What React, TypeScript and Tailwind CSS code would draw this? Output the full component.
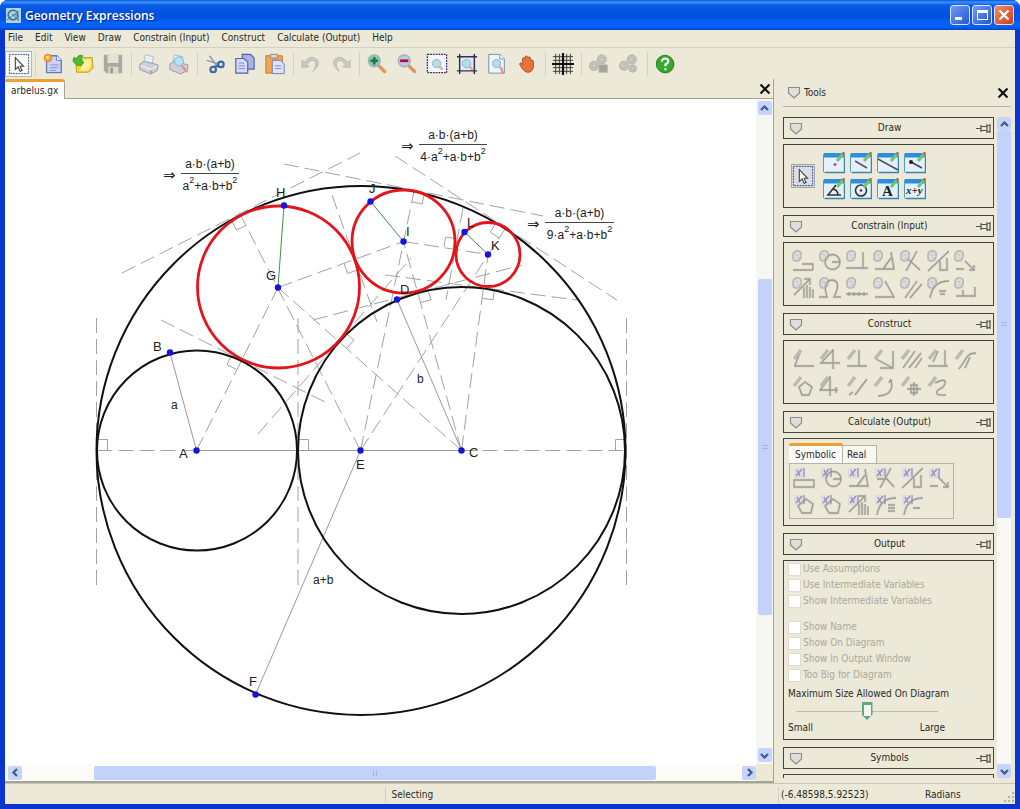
import React from "react";

type Pt = [number, number];

const A: Pt = [196.5, 450.5];
const C: Pt = [461.5, 450.5];
const E: Pt = [360.5, 450.5];
const G: Pt = [278, 287.5];
const I: Pt = [403.5, 241.5];
const K: Pt = [488, 254.5];
const B: Pt = [170, 352.5];
const D: Pt = [397, 299.5];
const F: Pt = [255.5, 694.5];
const H: Pt = [284, 205.5];
const J: Pt = [370.5, 201.5];
const L: Pt = [464.5, 232];

function Seg({ a, b, green = false }: { a: Pt; b: Pt; green?: boolean }) {
  return <line x1={a[0]} y1={a[1]} x2={b[0]} y2={b[1]} stroke={green ? "#3f8f4a" : "#9a9a9a"} />;
}

function Dash({ a, b }: { a: Pt; b: Pt }) {
  return <line x1={a[0]} y1={a[1]} x2={b[0]} y2={b[1]} stroke="#a2a2a2" strokeDasharray="15 6" />;
}

function RightAngle({ p, d, t, s = 10.5 }: { p: Pt; d: Pt; t: Pt; s?: number }) {
  const q = [
    [p[0] + t[0] * s, p[1] + t[1] * s],
    [p[0] + (t[0] + d[0]) * s, p[1] + (t[1] + d[1]) * s],
    [p[0] + d[0] * s, p[1] + d[1] * s],
  ];
  return <polyline points={q.map((v) => v.join(",")).join(" ")} fill="none" stroke="#a2a2a2" />;
}

function Formula({ x, y, lead, w }: { x: number; y: number; lead: string; w: number }) {
  const sup = <tspan dy="-7" fontSize="9">2</tspan>;
  return (
    <g fontSize="12" fill="#222">
      <text x={x} y={y + 7} fontFamily="DejaVu Sans" fontSize="15">⇒</text>
      <text x={x + 18 + w / 2} y={y - 5} textAnchor="middle">a·b·(a+b)</text>
      <line x1={x + 18} y1={y + 0.5} x2={x + 18 + w} y2={y + 0.5} stroke="#444" />
      <text x={x + 18 + w / 2} y={y + 17} textAnchor="middle">
        {lead}a{sup}<tspan dy="7">+a·b+b</tspan>{sup}
      </text>
    </g>
  );
}

const labels: [string, number, number][] = [
  ["A", 179, 458], ["B", 153, 351], ["C", 469, 457], ["D", 400, 294], ["E", 356, 469],
  ["F", 249, 686], ["G", 266, 280], ["H", 276, 197], ["I", 406, 236], ["J", 369, 193],
  ["K", 491, 250], ["L", 467, 227],
];

function Diagram() {
  return (
    <svg width="750" height="664" viewBox="5 99 750 664" className="block shrink-0 font-['Liberation_Sans',sans-serif]" role="img" aria-label="Arbelos diagram">
      <Dash a={[96.5, 318]} b={[96.5, 585]} />
      <Dash a={[298, 318]} b={[298, 585]} />
      <Dash a={[626.5, 318]} b={[626.5, 585]} />
      <Dash a={[122, 273]} b={[360, 153]} />
      <Dash a={[284, 164]} b={[543, 216]} />
      <Dash a={[395, 156]} b={[617, 300]} />
      <Dash a={[161, 320]} b={[325, 402]} />
      <Dash a={[332, 195]} b={[377, 322]} />
      <Dash a={[258, 434]} b={[411, 258]} />
      <Dash a={[313, 320]} b={[522, 265]} />
      <Dash a={[385, 275]} b={[577, 300]} />
      <Dash a={[463, 208]} b={[446, 300]} />
      <Dash a={A} b={[97, 450.5]} />
      <Dash a={C} b={[626, 450.5]} />
      <Dash a={A} b={G} />
      <Dash a={E} b={[239, 212]} />
      <Dash a={E} b={[414, 191.5]} />
      <Dash a={E} b={[505, 229]} />
      <Dash a={C} b={G} />
      <Dash a={C} b={I} />
      <Dash a={C} b={K} />
      <Dash a={G} b={I} />
      <Dash a={I} b={K} />
      <RightAngle p={[97, 450]} d={[1, 0]} t={[0, -1]} />
      <RightAngle p={[298, 450]} d={[1, 0]} t={[0, -1]} />
      <RightAngle p={[626, 450]} d={[-1, 0]} t={[0, -1]} />
      <RightAngle p={[241, 216]} d={[0.46, 0.89]} t={[-0.89, 0.46]} />
      <RightAngle p={[241, 360]} d={[-0.45, 0.89]} t={[-0.89, -0.45]} />
      <RightAngle p={[354, 260]} d={[-0.94, 0.34]} t={[0.34, 0.94]} />
      <RightAngle p={[339, 341]} d={[0.75, 0.67]} t={[0.67, -0.75]} />
      <RightAngle p={[414, 191.5]} d={[-0.2, 0.98]} t={[0.98, 0.2]} />
      <RightAngle p={[454.4, 249]} d={[-0.99, -0.15]} t={[0.15, -0.99]} />
      <RightAngle p={[504.7, 229]} d={[-0.545, 0.84]} t={[-0.84, -0.545]} />
      <RightAngle p={[418, 292.5]} d={[0.27, 0.96]} t={[0.96, -0.27]} />
      <RightAngle p={[484, 288]} d={[-0.13, 0.99]} t={[0.99, 0.13]} />
      <Seg a={A} b={C} />
      <Seg a={A} b={B} />
      <Seg a={C} b={D} />
      <Seg a={E} b={F} />
      <g fill="none" stroke="#111" strokeWidth="2">
        <circle cx="361" cy="450.5" r="264.5" />
        <circle cx="197" cy="450.5" r="100" />
        <circle cx="461.5" cy="450.5" r="163.5" />
      </g>
      <g fill="none" stroke="#e4141c" strokeWidth="2.8">
        <circle cx="278.5" cy="287" r="81" />
        <circle cx="403.5" cy="241.5" r="51.5" />
        <circle cx="488" cy="254.5" r="32" />
      </g>
      <Seg a={G} b={H} green />
      <Seg a={I} b={J} green />
      <Seg a={K} b={L} green />
      {[A, B, C, D, E, F, G, H, I, J, K, L].map((p, i) => (
        <circle key={i} cx={p[0]} cy={p[1]} r="3.2" fill="#1414dc" />
      ))}
      <g fontSize="13" fill="#222">
        {labels.map(([t, x, y]) => <text key={t} x={x} y={y}>{t}</text>)}
      </g>
      <g fontSize="12" fill="#222">
        <text x="171" y="409">a</text>
        <text x="417" y="383">b</text>
        <text x="313" y="584">a+b</text>
      </g>
      <Formula x={163} y={173} lead="" w={58} />
      <Formula x={401} y={144} lead="4·" w={68} />
      <Formula x={527} y={222} lead="9·" w={69} />
    </svg>
  );
}

/* ---------- toolbar icons ---------- */

const cursorPath = "M8 5 V18 L11 15.2 L13.2 20 L15.4 19 L13.2 14.5 H17 Z";

function Lens({ fill = "#a9d3e6" }: { fill?: string }) {
  return (
    <>
      <path d="M14 14 L21 21" stroke="#b9b9b9" strokeWidth="4" />
      <path d="M14 14 L20.5 20.5" stroke="#e9954f" strokeWidth="3" strokeLinecap="round" />
      <circle cx="9" cy="8.5" r="6.5" fill={fill} stroke="#9ab3bb" strokeWidth="1.4" />
    </>
  );
}

function MiniLens() {
  return (
    <>
      <path d="M14 14 L18 18" stroke="#e6a77a" strokeWidth="2.5" />
      <circle cx="11.5" cy="11.5" r="4.5" fill="#b4dcf0" stroke="#8fb4c4" />
    </>
  );
}

function Gears({ alt = false }: { alt?: boolean }) {
  return (
    <g fill="#c4c2b8" stroke="#b3b1a7">
      <circle cx="15" cy="7" r="5" /><circle cx="15" cy="7" r="1.6" fill="#ece9d8" />
      <circle cx="6.5" cy="14" r="5" /><circle cx="6.5" cy="14" r="1.6" fill="#ece9d8" />
      {alt ? <><circle cx="16" cy="17" r="4" /><circle cx="16" cy="17" r="1.2" fill="#ece9d8" /></> : <path d="M12 13 h9 v8 h-9z" fill="#a5a399" />}
    </g>
  );
}

const icons: Record<string, React.ReactNode> = {
  "New": (
    <>
      <path d="M5 3 h11 l5 5 v13.5 h-16z" fill="#c9d3f7" stroke="#6577b4" strokeWidth="1.4" />
      <path d="M16 3 v5 h5" fill="#fff" stroke="#6577b4" /><path d="M9 13 h9 M9 16 h9 M9 19 h6" stroke="#8493cb" />
      <circle cx="6.5" cy="5.5" r="4.2" fill="#f9a63a" stroke="#ee7b21" /><circle cx="6" cy="5" r="1.6" fill="#ffe08a" />
    </>
  ),
  "Open": (
    <>
      <path d="M4 9 h7 l2 -4 h9 l1 11 -5 5 h-13z" fill="#f5d53c" stroke="#b99a1f" />
      <path d="M12 7 h9 l-1 10 -3 2 h-8z" fill="#fff19a" />
      <path d="M1 9 L5 13 L10 14 L13 10 L10 9 Q10 6 12 3 Q7 1 5 6 L2 5 Z" fill="#4cbc30" stroke="#2c8a1d" strokeWidth=".8" />
    </>
  ),
  "Save": (
    <>
      <path d="M2 2 h20 v20 h-17 l-3 -3z" fill="#aaa89f" /><path d="M6 2 h12 v9 h-12z" fill="#e5e3d8" />
      <path d="M7 15 h11 v7 h-11z" fill="#dddbd0" /><path d="M9 16 h3 v6 h-3z" fill="#9a988f" />
    </>
  ),
  "Print": (
    <>
      <path d="M8 2 l9 2 -2 9 -9 -2z" fill="#e3f2fb" stroke="#a9bccb" />
      <path d="M2 12 l5 -3 15 4 -1 6 -7 4 -12 -5z" fill="#cfcfd6" stroke="#9696a0" />
      <path d="M3 14 l11 4 7 -4" fill="none" stroke="#fff" /><path d="M14 19 v3" stroke="#777" />
    </>
  ),
  "Print Preview": (
    <>
      <path d="M7 2 l9 2 -2 9 -9 -2z" fill="#e3f2fb" stroke="#a9bccb" />
      <path d="M2 12 l5 -3 15 4 -1 6 -7 4 -12 -5z" fill="#cfcfd6" stroke="#9696a0" />
      <path d="M15 14 l6 7" stroke="#d99a7c" strokeWidth="2.6" /><circle cx="12" cy="9" r="5" fill="#b4e2f2" stroke="#7fb6c9" />
    </>
  ),
  "Cut": (
    <>
      <path d="M6 3 L14 14 M3 8 L16 12" stroke="#8b99a8" strokeWidth="1.6" />
      <g fill="none" stroke="#3f66a6" strokeWidth="2.4"><circle cx="10" cy="18" r="3" /><circle cx="18.5" cy="12.5" r="3" /><path d="M11 15 l5 -1" /></g>
    </>
  ),
  "Copy": (
    <>
      <path d="M9 1.5 h9 l4 4 v12 h-13z" fill="#a9b2e6" stroke="#5660a4" strokeWidth="1.3" />
      <path d="M2 6 h9 l4 4 v12 h-13z" fill="#d4daf8" stroke="#5660a4" strokeWidth="1.3" /><path d="M5 11 h6 M5 14 h7 M5 17 h7" stroke="#7a86c8" />
    </>
  ),
  "Paste": (
    <>
      <path d="M2 3 h18 v19 h-18z" fill="#f5a54a" stroke="#cc7424" /><path d="M7 1.5 h8 v4 h-8z" fill="#dcd8cc" stroke="#8a8a8a" />
      <path d="M9 8 h9 l4 4 v10.5 h-13z" fill="#dfe4fb" stroke="#6b78b6" /><path d="M12 14 h7 M12 17 h7" stroke="#7a86c8" />
    </>
  ),
  "Undo": <path d="M2 8 L2 16 L10 15 L7.5 12.5 Q12 6 16 9 Q19 13 14 20 Q23 13 19 7 Q12 1 5 10z" fill="#cbc9bf" stroke="#b5b3aa" strokeWidth=".8" />,
  "Redo": <path transform="matrix(-1 0 0 1 24 0)" d="M2 8 L2 16 L10 15 L7.5 12.5 Q12 6 16 9 Q19 13 14 20 Q23 13 19 7 Q12 1 5 10z" fill="#cbc9bf" stroke="#b5b3aa" strokeWidth=".8" />,
  "Zoom In": <><Lens fill="#8fc3ae" /><path d="M9 4.5 v8 M5 8.5 h8" stroke="#157a3c" strokeWidth="2.8" /></>,
  "Zoom Out": <><Lens fill="#c9c6dd" /><path d="M4.5 8.5 h9" stroke="#a41244" strokeWidth="3" /></>,
  "Zoom to Selection": <><path d="M1.5 1.5 h21 v20 h-21z" fill="#f4f6fb" stroke="#33336c" strokeWidth="1.4" strokeDasharray="2 1" /><MiniLens /></>,
  "Zoom to Fit": <><path d="M4 3.5 h16 v16 h-16z" fill="#dfeaf5" /><path d="M4 1 v22 M20 1 v22 M1 4 h22 M1 19.5 h22" stroke="#30305e" strokeWidth="1.6" /><MiniLens /></>,
  "Zoom Page": <><path d="M3 1.5 h12 l5 5 v15.5 h-17z" fill="#eef6fc" stroke="#7088a8" /><path d="M15 1.5 v5 h5" fill="#fff" stroke="#7088a8" /><MiniLens /><path d="M16 17 l3 5" stroke="#e88a7c" strokeWidth="2" /></>,
  "Pan": <path d="M4 12 Q5 9 7.5 13 L7 6 Q8 4 9.5 6 L10 4 Q11.5 2 12.5 4 L13 5 Q15 3 16 6 L16.5 8 Q19 7 19 10 V15 Q18 21 13 21 Q8 21 4 12z" fill="#e8743c" stroke="#a84a20" />,
  "Grid": <><path d="M4 1 v22 M8 1 v22 M16 1 v22 M20 1 v22 M1 4 h22 M1 8 h22 M1 16 h22 M1 20 h22" stroke="#333" /><path d="M12 0 v24 M0 12 h24" stroke="#111" strokeWidth="2.4" /></>,
  "Lock Model": <Gears />,
  "Unlock Model": <Gears alt />,
  "Help": (
    <>
      <circle cx="13" cy="13" r="9.5" fill="#b9b7ad" /><circle cx="12" cy="12" r="9.5" fill="#36a82c" stroke="#1e7f1e" />
      <path d="M8.5 9.5 Q9 6 12.2 6 Q15.8 6.2 15.6 9.2 Q15.4 11 12.5 12.5 V14.5 M12.5 16.5 v2.4" fill="none" stroke="#fff" strokeWidth="2.3" />
    </>
  ),
};

const toolbar = [
  ["New", "Open", "Save"], ["Print", "Print Preview"], ["Cut", "Copy", "Paste"], ["Undo", "Redo"],
  ["Zoom In", "Zoom Out", "Zoom to Selection", "Zoom to Fit", "Zoom Page", "Pan"], ["Grid"],
  ["Lock Model", "Unlock Model"], ["Help"],
];

function Cursor() {
  return (
    <svg viewBox="0 0 24 24" className="size-[22px]">
      <rect x="1.5" y="1.5" width="21" height="21" fill="none" stroke="#2b3e86" strokeDasharray="2 1" />
      <path d={cursorPath} fill="#fff" stroke="#444" strokeWidth="1.2" />
    </svg>
  );
}

/* ---------- tool palettes ---------- */

const constrainIcons = [
  "M1 20 H21 M10 14 H21 V20", "M21 12 a7.5 7.5 0 1 1 -15 0 a7.5 7.5 0 1 1 15 0 M13 12 h8", "M0 18 H22 M17 2 V18",
  "M2 19 H21 L18 2 M10 19 L18 8", "M6 21 L17 1 M8 9 L20 20", "M1 21 L22 1 M13 11 V20 H20 V8", "M2 19 h8 M11 11 l9 9 M15 20 h5 v-5",
  "M2 18 L18 2 M12 2 h6 v6 M12 10 v11 M15 8 v13 M18 10 v11 M21 12 v9", "M0 20 H8 Q3 4 13 3 Q23 4 15 20 H22", "M0 17 H22 M3 15 v4 M8 15 v4 M13 15 v4 M18 15 v4",
  "M2 20 H21 L12 4", "M5 21 L17 4 M10 21 L22 7", "M3 21 C5 8 12 4 22 4 M12 14 h7 M13 17 h5", "M2 19 H21 V10 M9 13 v6",
];
const constructIcons = [
  "M2 18 H22 M8 5 L3 17", "M14 1 V21 M14 2 L2 15 H21", "M1 18 H21 M13 2 V18", "M3 11 L20 20 V3 M7 20 H20",
  "M3 20 L15 3 M9 20 L21 5 M15 20 L22 10", "M1 18 H21 M6 14 L11 3 M18 2 V18", "M5 21 L13 9 Q16 5 22 5 M11 20 L16 9",
  "M13 7 L20 12 L17 20 H10 L7 12 Z", "M11 1 V21 M11 2 L1 15 H19 M17 12 v6", "M3 20 L7 17 M9 20 L21 4", "M5 21 Q22 20 18 5 M16 8 L18 4",
  "M14 7 V21 M7 14 H21 M11 10 h6 v8 h-6z", "M8 8 Q20 2 18 9 Q16 13 11 15 Q6 21 19 20",
];
const calculateIcons = [
  "M1 13 H21 V20 H1 Z", "M21 12 a7.5 7.5 0 1 1 -15 0 a7.5 7.5 0 1 1 15 0 M13 12 h8", "M2 19 H21 L18 2 M10 19 L18 8", "M6 21 L17 1 M3 12 H13 L20 20",
  "M1 21 L22 1 M13 11 V20 H20 V8", "M2 19 h8 M10 10 l9 9 M15 20 h5 v-5",
  "M13 5 L20 10 L18 19 H9 L5 12 Z", "M13 5 L20 10 L18 19 H9 L5 12 Z", "M2 18 L18 2 M12 2 h6 v6 M12 10 v11 M15 8 v13 M18 10 v11 M21 12 v9",
  "M3 21 C5 8 12 4 22 4 M14 11 h7 M14 14 h7 M14 17 h7", "M3 21 C5 8 12 4 22 4 M12 14 h7",
];

function Palette({ paths, kind, cols }: { paths: string[]; kind: "lock" | "pencil" | "x"; cols: string }) {
  return (
    <div className={"grid w-max auto-rows-[27px] " + cols}>
      {paths.map((d, i) => (
        <button key={i} type="button" disabled aria-label={"tool " + (i + 1)} className="flex items-center justify-center">
          <svg viewBox="0 0 22 22" className="size-[22px]" fill="none">
            {kind === "lock" && <path d="M1 9 V4 Q3 0 7 1 Q10 2 9 7 Q8 11 5 11 Q1 11 1 8" fill="#dddbdc" stroke="#b9b7b2" strokeWidth="1.6" />}
            {kind === "x" && <rect x="1" y="1" width="11" height="10" fill="#dddbe6" />}
            <path d={d} stroke="#d2d0c4" strokeWidth="3" strokeOpacity=".6" />
            <path d={d} stroke="#9d9b91" strokeWidth="1.3" />
            {kind === "lock" && <path d="M3 5 Q5 3 6 6 M5 8 h3" stroke="#c4c2c8" />}
            {kind === "pencil" && <path d="M2 11 L9 2" stroke="#bcbab0" strokeWidth="3.5" />}
            {kind === "x" && <path d="M3 9 L9 2 M4 3 L7 9 M11 1 V10" stroke="#918eaa" strokeWidth="1.2" />}
          </svg>
        </button>
      ))}
    </div>
  );
}

const drawTools: [string, React.ReactNode][] = [
  ["Point", <circle cx="12" cy="12.5" r="1.6" fill="#c04a8a" />],
  ["Segment", <path d="M5 9 L17 16" stroke="#6a4a6a" strokeWidth="1.6" />],
  ["Line", <path d="M1 7 L21 18" stroke="#4a5568" strokeWidth="1.6" />],
  ["Vector", <><path d="M7 10 L18 16" stroke="#4a4040" strokeWidth="1.5" /><circle cx="7" cy="10" r="2" fill="#222" /></>],
  ["Angle", <path d="M13 7 L5 17 H18 M10 11 Q15 12 15 17" fill="none" stroke="#333" strokeWidth="1.6" />],
  ["Circle", <><circle cx="11" cy="12.5" r="5.5" fill="none" stroke="#333" strokeWidth="1.6" /><circle cx="11" cy="12.5" r="1.2" fill="#333" /></>],
  ["Text", <text x="5" y="18" fontSize="15" fontWeight="700" fontFamily="Liberation Serif" fill="#222">A</text>],
  ["Function", <text x="2" y="16" fontSize="11" fontWeight="700" fontStyle="italic" fontFamily="Liberation Serif" fill="#222">x+y</text>],
];

function Shield() {
  return (
    <svg viewBox="0 0 14 13" className="h-[13px] w-[14px] shrink-0">
      <path d="M1.5 1.5 H12.5 V7 L7 12 L1.5 7 Z" fill="#e0dedd" stroke="#8e8c86" strokeWidth="1.2" />
    </svg>
  );
}

function Section({ title, children, body }: { title: string; children?: React.ReactNode; body: string }) {
  return (
    <section className="flex shrink-0 flex-col gap-[5px]">
      <h3 className="flex h-[22px] items-center justify-between border border-[#45433a] pr-0.5 pl-[5px]">
        <Shield />
        <span>{title}</span>
        <svg viewBox="0 0 15 11" className="h-[11px] w-[15px]" fill="none" stroke="#55534a" strokeWidth="1.2">
          <path d="M0 5.5 H5 M5 2 V9 M5 3.5 H11 M5 7.5 H11 M11 1 V10 M14 1 V10 M11 1.5 L14 3 M11 9.5 L14 8" />
        </svg>
      </h3>
      <div className={"border border-[#45433a] " + body}>{children}</div>
    </section>
  );
}

function Check({ label }: { label: string }) {
  return (
    <label className="flex h-4 items-center gap-0.5 text-[#aaa899]">
      <input type="checkbox" disabled className="size-[13px] appearance-none border border-[#dedccc] bg-white" />
      {label}
    </label>
  );
}

const arrows = { up: "M3 8 L6.5 4.5 L10 8", down: "M3 5 L6.5 8.5 L10 5", left: "M8 3 L4.5 6.5 L8 10", right: "M5 3 L8.5 6.5 L5 10" };

function ArrowButton({ dir }: { dir: keyof typeof arrows }) {
  return (
    <button type="button" aria-label={"Scroll " + dir} className="flex size-[14px] shrink-0 items-center justify-center rounded-xs bg-[#c6d4fb]">
      <svg viewBox="0 0 13 13" className="size-[13px]"><path d={arrows[dir]} fill="none" stroke="#42578a" strokeWidth="2.2" /></svg>
    </button>
  );
}

function CloseX({ label }: { label: string }) {
  return (
    <button type="button" aria-label={label} className="flex size-3 items-center justify-center">
      <svg viewBox="0 0 12 12" className="size-3"><path d="M1.5 1.5 L10.5 10.5 M10.5 1.5 L1.5 10.5" stroke="#111" strokeWidth="2.2" /></svg>
    </button>
  );
}

export default function App() {
  return (
    <div className="flex h-screen w-full flex-col overflow-hidden rounded-t-lg bg-[#0a36d0] font-['DejaVu_Sans_Condensed','DejaVu_Sans',sans-serif] text-[10px] leading-4 text-[#2a2a26]">
      <header className="flex h-[30px] shrink-0 items-center gap-1 bg-[linear-gradient(to_bottom,#0a50d8_0%,#3a93fb_7%,#0759e6_18%,#0050de_55%,#0560f5_75%,#0560f8_90%,#0345c4_100%)] px-1.5">
        <svg viewBox="0 0 15 15" className="size-[15px]">
          <rect width="15" height="15" fill="#a9d4ea" />
          <circle cx="7" cy="7" r="4.8" fill="none" stroke="#397090" strokeWidth="1.6" /><path d="M6 6 L13 13 M7 7 h5 v5 M1 12 L13 3" stroke="#4d7c96" fill="none" />
        </svg>
        <h1 className="flex-1 pt-0.5 font-['Open_Sans','Noto_Sans',sans-serif] text-[12px] font-semibold text-white [text-shadow:1px_1px_1px_#0a2a80]">Geometry Expressions</h1>
        <div className="flex gap-0.5">
          <button type="button" aria-label="Minimize" className="flex size-5 items-end rounded-[3px] border border-[#dbe6ff] bg-[linear-gradient(135deg,#6f9bf6,#2557d8)] p-1"><span className="h-[3px] w-[7px] bg-white" /></button>
          <button type="button" aria-label="Maximize" className="flex size-5 items-center justify-center rounded-[3px] border border-[#dbe6ff] bg-[linear-gradient(135deg,#6f9bf6,#2557d8)]"><span className="h-[10px] w-[11px] border border-t-[3px] border-white" /></button>
          <button type="button" aria-label="Close" className="flex size-5 items-center justify-center rounded-[3px] border border-[#f2dcd8] bg-[linear-gradient(135deg,#ee8f6e,#cf3c14)]">
            <svg viewBox="0 0 12 12" className="size-3"><path d="M1.5 1.5 L10.5 10.5 M10.5 1.5 L1.5 10.5" stroke="#fff" strokeWidth="2.2" /></svg>
          </button>
        </div>
      </header>

      <div className="mx-[5px] mb-[5px] flex min-h-0 flex-1 flex-col bg-[#ece9d8]">
        <nav className="flex h-[18px] shrink-0 items-center gap-3 border-b border-[#d3d0c2] pb-0.5 pl-[3px]">
          {["File", "Edit", "View", "Draw", "Constrain (Input)", "Construct", "Calculate (Output)", "Help"].map((m) => (
            <button key={m} type="button">{m}</button>
          ))}
        </nav>

        <div className="flex h-[31px] shrink-0 items-center" role="toolbar">
          <button type="button" aria-label="Select" className="flex h-[26px] w-[27px] items-center justify-center border border-[#a9b6cc] bg-[#fbfbf8]"><Cursor /></button>
          {toolbar.map((group, g) => (
            <div key={g} className="flex items-center">
              <span className="mr-0.5 ml-[3px] h-6 w-px bg-[#d3d0c0]" />
              {group.map((name) => (
                <button key={name} type="button" aria-label={name} title={name} className="flex h-[26px] w-[30px] items-center justify-center">
                  <svg viewBox="0 0 24 24" className="size-[22px]">{icons[name]}</svg>
                </button>
              ))}
            </div>
          ))}
        </div>

        <div className="flex min-h-0 flex-1">
          <main className="flex min-w-0 flex-1 flex-col border-r border-b-2 border-[#a5a396]">
            <div className="flex h-5 shrink-0 items-center justify-between border-b border-[#a5a396] pr-0.5">
              <button type="button" role="tab" aria-selected="true" className="-mb-px h-5 self-end rounded-t-xs border-t-[3px] border-r border-t-[#f0a030] border-r-[#a5a396] bg-white px-1.5">arbelus.gx</button>
              <CloseX label="Close document" />
            </div>
            <div className="flex min-h-0 flex-1">
              <div className="min-w-0 flex-1 overflow-hidden bg-white"><Diagram /></div>
              <div className="flex w-[17px] shrink-0 flex-col items-center bg-[#f7f7f2] py-0.5">
                <ArrowButton dir="up" />
                <div className="flex w-3.5 flex-1 flex-col">
                  <div className="flex-[163]" />
                  <div className="flex flex-[335] flex-col items-center justify-center gap-0.5 rounded-xs bg-[#c3d2fb]"><i className="h-px w-1.5 bg-[#9fb5f0]" /><i className="h-px w-1.5 bg-[#9fb5f0]" /></div>
                  <div className="flex-[133]" />
                </div>
                <ArrowButton dir="down" />
              </div>
            </div>
            <div className="flex h-[17px] shrink-0">
              <div className="flex min-w-0 flex-1 items-center bg-[#fbfbf8] pl-[3px]">
                <ArrowButton dir="left" />
                <div className="flex h-3.5 flex-1">
                  <div className="flex-[72]" />
                  <div className="flex flex-[560] items-center justify-center gap-0.5 rounded-xs bg-[#c3d2fb]"><i className="h-1.5 w-px bg-[#9fb5f0]" /><i className="h-1.5 w-px bg-[#9fb5f0]" /></div>
                  <div className="flex-[86]" />
                </div>
                <ArrowButton dir="right" />
              </div>
              <div className="w-[17px] shrink-0" />
            </div>
          </main>

          <aside className="flex w-[241px] shrink-0 flex-col pr-1 pb-[5px] pl-[9px]">
            <div className="flex h-7 shrink-0 items-center gap-[3px] border-b border-[#b5b3a5] pr-0.5 pl-1">
              <Shield />
              <h2 className="flex-1">Tools</h2>
              <CloseX label="Close tools" />
            </div>
            <div className="flex min-h-0 flex-1 gap-[3px] pt-2.5">
              <div className="flex min-w-0 flex-1 flex-col gap-[7px] overflow-hidden">
                <Section title="Draw" body="flex h-16 items-center gap-2 pl-[7px]">
                  <button type="button" aria-label="Select" className="border border-[#9fa6b5] bg-[#dcdde0]"><Cursor /></button>
                  <div className="grid grid-cols-[repeat(4,22px)] gap-x-[5px] gap-y-1">
                    {drawTools.map(([name, art]) => (
                      <button key={name} type="button" aria-label={name}>
                        <svg viewBox="0 0 22 22" className="size-[22px]">
                          <rect x=".5" y="1.5" width="21" height="19" rx="1" fill="#e4f1fb" stroke="#4ca0c8" />
                          <rect x="1" y="1" width="20" height="4.5" fill="#2d8fdc" /><path d="M2 20.5 H21.5 V6" stroke="#3a86a8" strokeWidth="1.5" fill="none" />
                          {art}
                          <path d="M14 9 L20 2" stroke="#6fc66b" strokeWidth="3" /><path d="M20.500 3 V0" stroke="#c65a3a" strokeWidth="2" />
                        </svg>
                      </button>
                    ))}
                  </div>
                </Section>
                <Section title="Constrain (Input)" body="h-16 pt-1 pl-[5px]"><Palette paths={constrainIcons} kind="lock" cols="grid-cols-[repeat(7,27px)]" /></Section>
                <Section title="Construct" body="h-16 pt-1 pl-[5px]"><Palette paths={constructIcons} kind="pencil" cols="grid-cols-[repeat(7,27px)]" /></Section>
                <Section title="Calculate (Output)" body="h-[88px] pt-1 pl-[5px]">
                  <div className="flex items-end" role="tablist">
                    <button type="button" role="tab" aria-selected="true" className="h-5 rounded-t-xs border-t-[3px] border-r border-t-[#f0a030] border-r-[#b5b3a5] bg-[#fcfcfa] px-1.5">Symbolic</button>
                    <button type="button" role="tab" aria-selected="false" className="h-[18px] border-t border-r border-[#b5b3a5] bg-[#f8f7f0] pr-2.5 pl-1">Real</button>
                  </div>
                  <div className="w-max border border-[#b5b3a5] pr-px"><Palette paths={calculateIcons} kind="x" cols="grid-cols-[repeat(6,27px)]" /></div>
                </Section>
                <Section title="Output" body="flex h-[180px] flex-col pl-1">
                  <Check label="Use Assumptions" />
                  <Check label="Use Intermediate Variables" />
                  <Check label="Show Intermediate Variables" />
                  <div className="h-2.5" />
                  <Check label="Show Name" />
                  <Check label="Show On Diagram" />
                  <Check label="Show In Output Window" />
                  <Check label="Too Big for Diagram" />
                  <label htmlFor="max-size" className="pt-[3px]">Maximum Size Allowed On Diagram</label>
                  <input
                    id="max-size"
                    type="range"
                    defaultValue={50}
                    className="ml-2 h-[18px] w-[142px] appearance-none bg-[linear-gradient(#bdbbae,#bdbbae)] bg-[length:100%_1px] bg-center bg-no-repeat [&::-webkit-slider-thumb]:h-[18px] [&::-webkit-slider-thumb]:w-[11px] [&::-webkit-slider-thumb]:appearance-none [&::-webkit-slider-thumb]:bg-[linear-gradient(#f4f4f0,#f4f4f0)] [&::-webkit-slider-thumb]:bg-[length:7px_11px] [&::-webkit-slider-thumb]:bg-[position:2px_3px] [&::-webkit-slider-thumb]:bg-no-repeat [&::-webkit-slider-thumb]:bg-[#5aa884] [&::-webkit-slider-thumb]:[clip-path:polygon(0_0,100%_0,100%_70%,50%_100%,0_70%)]"
                  />
                  <div className="flex w-[157px] justify-between"><span>Small</span><span>Large</span></div>
                </Section>
                <Section title="Symbols" body="h-16" />
              </div>
              <div className="flex w-3.5 shrink-0 flex-col bg-[#f9f8f4]">
                <ArrowButton dir="up" />
                <div className="flex flex-1 flex-col">
                  <div className="flex flex-[386] flex-col items-center justify-center gap-0.5 rounded-xs bg-[#c3d2fb]"><i className="h-px w-1.5 bg-[#9fb5f0]" /><i className="h-px w-1.5 bg-[#9fb5f0]" /></div>
                  <div className="flex-[246]" />
                </div>
                <ArrowButton dir="down" />
              </div>
            </div>
          </aside>
        </div>

        <footer className="flex h-[21px] shrink-0 items-center border-t border-[#c9c6b6] pt-1 pb-0.5">
          <div className="flex-[383]" />
          <div className="flex-[390] border-l border-[#cfccbc] pl-1.5">Selecting</div>
          <div className="flex w-[237px] shrink-0 border-l border-[#cfccbc] pl-0.5">
            <span className="w-36">(-6.48598,5.92523)</span>
            <span className="flex-1">Radians</span>
            <svg viewBox="0 0 12 12" className="size-3 self-end" fill="#b5b3a5"><path d="M9 1h2v2h-2z M9 5h2v2h-2z M9 9h2v2h-2z M5 5h2v2h-2z M5 9h2v2h-2z M1 9h2v2h-2z" /></svg>
          </div>
        </footer>
      </div>
    </div>
  );
}
